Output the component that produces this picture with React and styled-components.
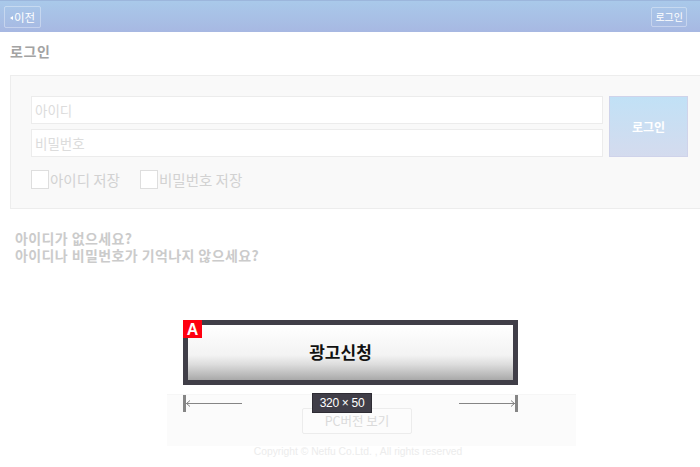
import React from "react";
import styled, { createGlobalStyle } from "styled-components";

const Global = createGlobalStyle`
  html, body { margin: 0; padding: 0; background: #fff; }
  body { font-family: "Noto Sans CJK KR", "Noto Sans", sans-serif; }
  * { box-sizing: border-box; }
`;

const Page = styled.div`
  position: relative;
  min-height: 467px;
  width: 700px;
  display: flex;
  flex-direction: column;
  overflow: hidden;
`;

const Header = styled.div`
  height: 32px;
  background: linear-gradient(#a9c9ea, #a7b8e2);
  border-top: 1px solid #9cb6dc;
  display: flex;
  align-items: center;
  justify-content: space-between;
  padding: 0 13px 0 4px;
`;

const HeadButton = styled.div`
  height: ${(p) => (p.$small ? 20 : 22)}px;
  padding: 0 ${(p) => (p.$small ? 3 : 5)}px;
  border: 1px solid rgba(255, 255, 255, 0.35);
  border-radius: 2px;
  color: #fff;
  font-size: ${(p) => (p.$small ? 10 : 11.5)}px;
  line-height: ${(p) => (p.$small ? 18 : 20)}px;
  display: flex;
  align-items: center;
  gap: 1px;
`;

const Tri = styled.span`
  width: 0;
  height: 0;
  border-top: 2.5px solid transparent;
  border-bottom: 2.5px solid transparent;
  border-right: 3px solid #fff;
  margin-top: 3px;
`;

const Title = styled.h1`
  margin: 0;
  padding: 10px 10px 0;
  height: 43px;
  font-size: 14px;
  letter-spacing: 0.6px;
  font-weight: 700;
  color: #a3a3a3;
  line-height: 18px;
`;

const Box = styled.div`
  margin-left: 10px;
  width: 700px;
  background: #f9f9f9;
  border: 1px solid #ededed;
  padding: 20px 0 19px 20px;
`;

const FormGrid = styled.div`
  display: grid;
  grid-template-columns: 572px 79px;
  column-gap: 6px;
`;

const Inputs = styled.div`
  display: flex;
  flex-direction: column;
  gap: 5px;
`;

const Input = styled.div`
  height: 28px;
  background: #fff;
  border: 1px solid #ececec;
  color: #dcdcdc;
  font-size: 13.5px;
  line-height: 26px;
  padding-left: 3px;
`;

const LoginBtn = styled.div`
  height: 61px;
  background: linear-gradient(#c1e1f6, #d4dbee);
  border: 1px solid #cfd3ea;
  color: #fff;
  font-size: 12px;
  font-weight: 700;
  display: flex;
  align-items: center;
  justify-content: center;
`;

const CheckRow = styled.div`
  display: flex;
  align-items: center;
  margin-top: 13px;
`;

const Check = styled.label`
  display: flex;
  align-items: center;
  margin-right: ${(p) => p.$mr || 0}px;
  color: #d2d2d2;
  font-size: 14.5px;
  line-height: 19px;
`;

const CheckBox = styled.span`
  width: 18px;
  height: 19px;
  border: 1px solid #dedede;
  background: #fff;
  margin-right: 1px;
`;

const Help = styled.div`
  padding: 21px 15px 0;
  font-size: 14px;
  letter-spacing: 0.4px;
  font-weight: 700;
  color: #cbcbcb;
  line-height: 17px;
`;

const Footer = styled.div`
  margin-top: auto;
`;

const Band = styled.div`
  margin-left: 167px;
  width: 409px;
  height: 52px;
  background: #fbfbfb;
  border-top: 1px solid #f6f6f6;
  padding: 13px 0 0 135px;
`;

const PcBtn = styled.div`
  width: 110px;
  height: 26px;
  border: 1px solid #ececec;
  border-radius: 2px;
  background: #fcfcfc;
  color: #dadada;
  font-size: 12.5px;
  line-height: 24px;
  text-align: center;
`;

const Copy = styled.div`
  height: 21px;
  padding-left: 16px;
  text-align: center;
  font-family: "Liberation Sans", sans-serif;
  font-size: 10.3px;
  line-height: 12px;
  color: #ececec;
`;

/* ad preview overlay */
const Ad = styled.div`
  position: absolute;
  left: 183px;
  top: 320px;
  width: 335px;
  height: 65px;
  border: 5px solid #403e48;
  background: #403e48;
`;

const AdInner = styled.div`
  height: 100%;
  background: linear-gradient(#ffffff 0%, #f3f3f3 55%, #dcdcdc 72%, #a9a9a9 100%);
  display: flex;
  align-items: center;
  justify-content: center;
  font-size: 17px;
  font-weight: 700;
  color: #111;
  padding: 0 20px 3px 0;
`;

const Badge = styled.div`
  position: absolute;
  left: -5px;
  top: -5px;
  width: 19px;
  height: 18px;
  background: #ff0010;
  color: #fff;
  font-family: "Liberation Sans", sans-serif;
  font-weight: 700;
  font-size: 16px;
  line-height: 19px;
  text-align: center;
`;

const Measure = styled.div`
  position: absolute;
  left: 183px;
  top: 395px;
  width: 335px;
  height: 17px;
`;

const Arrow = styled.svg`
  position: absolute;
  top: 0;
  ${(p) => (p.$right ? "right: 0;" : "left: 0;")}
`;

const SizeLabel = styled.div`
  position: absolute;
  left: 312px;
  top: 393px;
  width: 60px;
  height: 20px;
  background: #403e48;
  border: 1px solid #2e2c34;
  color: #fff;
  font-family: "Liberation Sans", sans-serif;
  font-size: 12px;
  line-height: 18px;
  text-align: center;
  letter-spacing: -0.3px;
`;

export default function App() {
  return (
    <>
      <Global />
      <Page>
        <Header>
          <HeadButton>
            <Tri />
            이전
          </HeadButton>
          <HeadButton $small>로그인</HeadButton>
        </Header>
        <Title>로그인</Title>
        <Box>
          <FormGrid>
            <Inputs>
              <Input>아이디</Input>
              <Input>비밀번호</Input>
            </Inputs>
            <LoginBtn>로그인</LoginBtn>
          </FormGrid>
          <CheckRow>
            <Check $mr={20}>
              <CheckBox />
              아이디 저장
            </Check>
            <Check>
              <CheckBox />
              비밀번호 저장
            </Check>
          </CheckRow>
        </Box>
        <Help>
          아이디가 없으세요?
          <br />
          아이디나 비밀번호가 기억나지 않으세요?
        </Help>
        <Footer>
          <Band>
            <PcBtn>PC버전 보기</PcBtn>
          </Band>
          <Copy>Copyright © Netfu Co.Ltd. , All rights reserved</Copy>
        </Footer>

        <Ad>
          <AdInner>광고신청</AdInner>
          <Badge>A</Badge>
        </Ad>
        <Measure>
          <Arrow width="60" height="17" viewBox="0 0 60 17">
            <rect x="0" y="0" width="3" height="17" fill="#858585" />
            <line x1="3" y1="8.5" x2="59" y2="8.5" stroke="#858585" strokeWidth="1" />
            <path d="M3.5 8.5 L7 5.5 M3.5 8.5 L7 11.5" stroke="#858585" strokeWidth="1" fill="none" />
          </Arrow>
          <Arrow $right width="60" height="17" viewBox="0 0 60 17">
            <rect x="57" y="0" width="3" height="17" fill="#858585" />
            <line x1="1" y1="8.5" x2="57" y2="8.5" stroke="#858585" strokeWidth="1" />
            <path d="M56.5 8.5 L53 5.5 M56.5 8.5 L53 11.5" stroke="#858585" strokeWidth="1" fill="none" />
          </Arrow>
        </Measure>
        <SizeLabel>320 × 50</SizeLabel>
      </Page>
    </>
  );
}
